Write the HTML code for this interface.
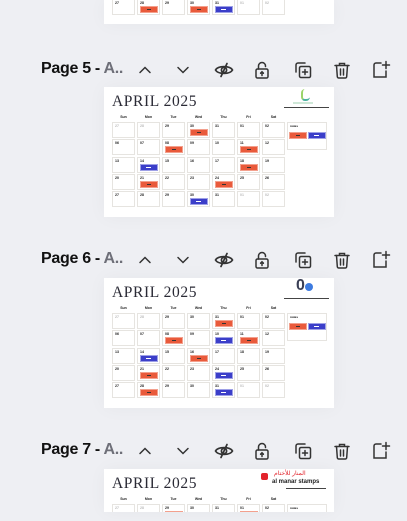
<!DOCTYPE html>
<html><head><meta charset="utf-8">
<style>
*{margin:0;padding:0;box-sizing:border-box}
html,body{width:407px;height:521px;overflow:hidden}
body{background:#eeeff3;position:relative;font-family:"Liberation Sans",sans-serif}
.thumb{position:absolute;left:104px;width:230px;height:130px;background:#fff;overflow:hidden;box-shadow:0 0 18px rgba(0,0,0,0.04)}
.title{position:absolute;left:8px;top:6px;font-family:"Liberation Serif",serif;font-size:15.5px;color:#2a2a35;letter-spacing:0.6px;white-space:nowrap}
.dh{position:absolute;top:28px;font-size:3.5px;font-weight:bold;color:#222;width:23px;text-align:center}
.cell{position:absolute;width:23px;height:16px;border:1px solid #e6e4e0;background:#fff}
.cell i{position:absolute;left:2px;top:1px;font-size:3.5px;font-style:normal;font-weight:bold;color:#222}
.ev{position:absolute;left:3px;top:7px;width:16px;height:5px}
.o{background:#e95a3b;outline:1px solid #f3a08d}
.b{background:#3b3ec9;outline:1px solid #9ea0e6}
.o::after{content:"";position:absolute;left:6px;top:2px;width:4px;height:1px;background:#333}
.b::after{content:"";position:absolute;left:5px;top:2px;width:5px;height:1px;background:#fff}
.notes{position:absolute;left:183px;top:35px;width:40px;height:28px;border:1px solid #e6e4e0}
.hdr{position:absolute;left:0;width:407px;height:24px}
.lbl{position:absolute;left:41px;top:2px;font-size:16px;font-weight:bold;color:#111;letter-spacing:-0.3px;white-space:nowrap}
.lbl span{color:#6e6f78}
.ic{position:absolute;top:2px;width:20px;height:20px}
.ul{position:absolute;left:180px;width:45px;height:1px;background:#444}
</style></head><body>
<div id="root"></div>
<script>
const root=document.getElementById('root');
const nums=[["27","28","29","30","31","01","02"],["06","07","08","09","10","11","12"],["13","14","15","16","17","18","19"],["20","21","22","23","24","25","26"],["27","28","29","30","31","01","02"]];
function thumb(top,evs,logo,h,extra){
 let s='<div class="thumb" style="top:'+top+'px;height:'+(h||130)+'px'+(extra||'')+'"><div class="title">APRIL 2025</div>';
 ["Sun","Mon","Tue","Wed","Thu","Fri","Sat"].forEach((d,c)=>s+='<div class="dh" style="left:'+(8+c*25)+'px">'+d+'</div>');
 for(let r=0;r<5;r++)for(let c=0;c<7;c++){
  const n=nums[r][c];const grey=(r==0&&c<2)||(r==4&&c>4);
  let e='';const k=evs[r+','+c];if(k)e='<div class="ev '+k+'"></div>';
  s+='<div class="cell" style="left:'+(8+c*25)+'px;top:'+(35+r*17.3)+'px"><i style="color:'+(grey?'#bbb':'#222')+'">'+n+'</i>'+e+'</div>';
 }
 s+='<div class="notes"><i style="position:absolute;left:2px;top:1px;font-size:3px;font-weight:bold;font-style:normal">notes</i><div class="ev o" style="top:10px;left:2px;width:16px"></div><div class="ev b" style="top:10px;left:21px;width:16px"></div></div>';
 s+=logo+'</div>';return s;
}
function hdr(top,n){
 return '<div class="hdr" style="top:'+top+'px"><div class="lbl">Page '+n+' - <span>A..</span></div>'+
 '<svg class="ic" style="left:135px" viewBox="0 0 20 20" fill="none" stroke="#333" stroke-width="1.5" stroke-linecap="round"><path d="M5 12.5l5-5 5 5"/></svg>'+
 '<svg class="ic" style="left:173px" viewBox="0 0 20 20" fill="none" stroke="#333" stroke-width="1.5" stroke-linecap="round"><path d="M5 7.5l5 5 5-5"/></svg>'+
 '<svg class="ic" style="left:214px" viewBox="0 0 20 20" fill="none" stroke="#333" stroke-width="1.7" stroke-linecap="round"><path d="M1.5 10C4 5.5 16 5.5 18.5 10 16 14.5 4 14.5 1.5 10z"/><circle cx="10" cy="10" r="2.6"/><path d="M13 3.5L7 16.5"/></svg>'+
 '<svg class="ic" style="left:252px" viewBox="0 0 20 20" fill="none" stroke="#333" stroke-width="1.5" stroke-linecap="round"><rect x="4" y="9" width="12" height="9" rx="1.5"/><path d="M6.5 9V6a3.5 3.5 0 0 1 7 0v.5"/><path d="M10 12v3.5"/><path d="M8.6 13.2L10 11.8 11.4 13.2"/></svg>'+
 '<svg class="ic" style="left:293px" viewBox="0 0 20 20" fill="none" stroke="#333" stroke-width="1.5" stroke-linecap="round"><path d="M12 3H5a2 2 0 0 0-2 2v7"/><rect x="6.5" y="6.5" width="11" height="11" rx="1.5"/><path d="M12 9.5v5M9.5 12h5"/></svg>'+
 '<svg class="ic" style="left:332px" viewBox="0 0 20 20" fill="none" stroke="#333" stroke-width="1.5" stroke-linecap="round"><path d="M3 5.5h14M7.5 5.5V3.5h5v2"/><path d="M4.5 5.5l.8 11a1.5 1.5 0 0 0 1.5 1.5h6.4a1.5 1.5 0 0 0 1.5-1.5l.8-11"/><path d="M8.5 9v6M11.5 9v6"/></svg>'+
 '<svg class="ic" style="left:371px" viewBox="0 0 20 20" fill="none" stroke="#333" stroke-width="1.5" stroke-linecap="round"><path d="M10 3H5a2 2 0 0 0-2 2v12h12v-6"/><path d="M15 1.5v7M11.5 5h7"/></svg>'+
 '</div>';
}
let h='';
h+='<div class="thumb" style="top:0;height:24px"><div style="position:absolute;top:-105px;left:0;width:230px;height:130px">'+thumb(0,{'4,1':'o','4,3':'o','4,4':'b'},'',130,';left:0')+'</div></div>';
h+=hdr(58,5);
h+=thumb(87,{'0,3':'o','1,2':'o','1,5':'o','2,1':'b','2,5':'o','3,1':'o','3,4':'o','4,3':'b'},
 '<div style="position:absolute;left:197px;top:2px;width:9px;height:12px;border-left:2px solid #9bd46a;border-bottom:2px solid #4bb3a0;border-radius:4px"></div><div style="position:absolute;left:189px;top:15px;width:20px;height:2px;background:#cfe8d8"></div><div class="ul" style="top:20px"></div>');
h+=hdr(248,6);
h+=thumb(278,{'0,4':'o','1,2':'o','1,4':'b','1,5':'o','2,1':'b','2,3':'o','3,1':'o','3,4':'b','4,1':'o','4,4':'b'},
 '<div style="position:absolute;left:192px;top:-1px;font:bold 16px \'Liberation Sans\',sans-serif;color:#3a3f55">0</div><div style="position:absolute;left:201px;top:5px;width:8px;height:8px;border-radius:50%;background:#3d7be0"></div><div class="ul" style="top:20px"></div>');
h+=hdr(439,7);
h+=thumb(469,{'0,2':'o','0,5':'o'},
 '<div style="position:absolute;left:157px;top:4px;width:7px;height:7px;background:#e2232b;border-radius:2px"></div><div style="position:absolute;left:170px;top:1px;font-size:6px;color:#e2232b;white-space:nowrap">المنار للأختام</div><div style="position:absolute;left:168px;top:10px;font:bold 6px \'Liberation Sans\',sans-serif;color:#222;white-space:nowrap">al manar stamps</div><div class="ul" style="top:19px;left:182px;width:40px"></div>',43);
root.innerHTML=h;
</script>
</body></html>
